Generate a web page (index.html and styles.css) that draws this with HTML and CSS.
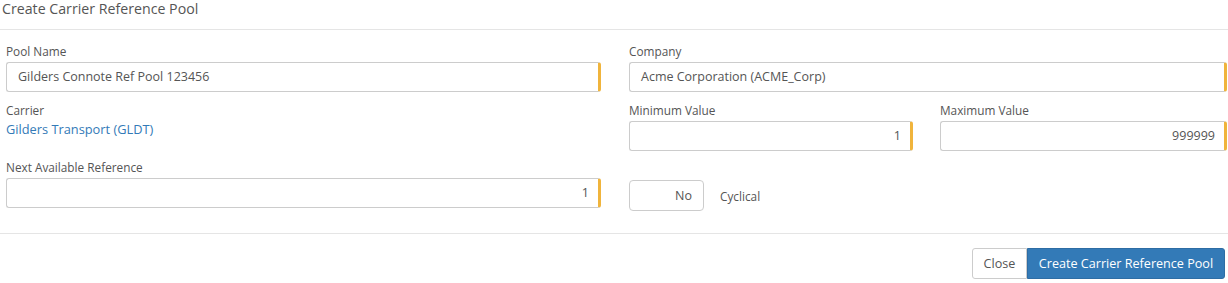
FILE: index.html
```html
<!DOCTYPE html>
<html>
<head>
<meta charset="utf-8">
<link rel="stylesheet" href="styles.css">
</head>
<body>
<div class="modal">
  <div class="modal-header">Create Carrier Reference Pool</div>
  <div class="modal-body">
    <div class="grid">
      <div class="field">
        <label class="lbl">Pool Name</label>
        <div class="input req">Gilders Connote Ref Pool 123456</div>
      </div>
      <div class="field">
        <label class="lbl">Company</label>
        <div class="input req">Acme Corporation (ACME_Corp)</div>
      </div>
      <div class="field">
        <label class="lbl">Carrier</label>
        <a class="link">Gilders Transport (GLDT)</a>
      </div>
      <div class="pair">
        <div class="field">
          <label class="lbl">Minimum Value</label>
          <div class="input req num">1</div>
        </div>
        <div class="field">
          <label class="lbl">Maximum Value</label>
          <div class="input req num">999999</div>
        </div>
      </div>
      <div class="field next">
        <label class="lbl">Next Available Reference</label>
        <div class="input req num">1</div>
      </div>
      <div class="toggle-row">
        <div class="toggle">No</div>
        <span class="toggle-lbl">Cyclical</span>
      </div>
    </div>
  </div>
  <div class="modal-footer">
    <button class="btn btn-default">Close</button><button class="btn btn-primary">Create Carrier Reference Pool</button>
  </div>
</div>
</body>
</html>
```
FILE: styles.css
```css
* { box-sizing: border-box; }
html, body { margin: 0; padding: 0; background: #fff; }
body {
  font-family: "Open Sans", "Noto Sans", sans-serif;
  color: #555;
  font-size: 12px;
}
.modal { width: 1228px; }
.modal-header {
  font-size: 14.2px;
  color: #555;
  padding: 0 0 0 2px;
  height: 30px;
  line-height: 18px;
  border-bottom: 1px solid #e5e5e5;
}
.modal-body {
  padding: 13px 1px 22px 6px;
  border-bottom: 1px solid #e5e5e5;
}
.grid {
  display: grid;
  grid-template-columns: 595px 598px;
  column-gap: 28px;
}
.field { display: flex; flex-direction: column; }
.lbl {
  font-size: 11.8px;
  color: #555;
  line-height: 16px;
  margin-bottom: 3px;
  height: 16px;
}
.input {
  height: 30px;
  border: 1px solid #ccc;
  border-right: 3px solid #f0b43c;
  border-radius: 3px;
  padding: 0 11px;
  font-size: 12.5px;
  color: #555;
  line-height: 28px;
  margin-bottom: 10px;
}
.num { text-align: right; padding-right: 9px; }
.link {
  color: #337ab7;
  font-size: 12.8px;
  line-height: 17px;
}
.pair {
  display: grid;
  grid-template-columns: 284px 287px;
  column-gap: 27px;
}
.pair .input { margin-bottom: 8px; }
.toggle-row {
  display: flex;
  align-items: center;
  padding-top: 21px;
  align-self: start;
}
.toggle {
  width: 75px;
  height: 31px;
  border: 1px solid #ccc;
  border-radius: 4px;
  text-align: right;
  padding-right: 11px;
  line-height: 29px;
  font-size: 12.5px;
  color: #555;
}
.toggle-lbl {
  margin-left: 16px;
  font-size: 11.8px;
  color: #555;
}
.next .input { margin-bottom: 0; }
.modal-footer {
  display: flex;
  justify-content: flex-end;
  padding: 14px 3px 0 0;
}
.btn {
  font-family: "Open Sans", "Noto Sans", sans-serif;
  font-size: 12.6px;
  height: 31px;
  border: 1px solid #ccc;
  background: #fff;
  color: #555;
  margin: 0;
  padding: 0;
}
.btn-default {
  border-radius: 3px 0 0 3px;
  width: 55px;
}
.btn-primary {
  background: #337ab7;
  border-color: #2e6da4;
  color: #fff;
  border-radius: 0 3px 3px 0;
  width: 198px;
}
```
